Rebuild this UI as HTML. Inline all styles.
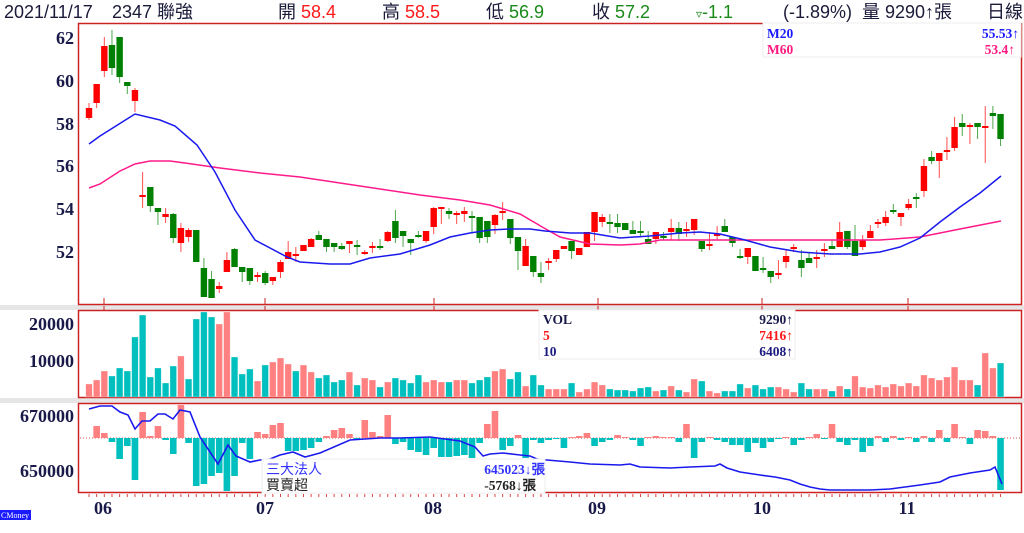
<!DOCTYPE html>
<html><head><meta charset="utf-8">
<style>
html,body{margin:0;padding:0;background:#fff;width:1024px;height:533px;overflow:hidden}
svg{position:absolute;left:0;top:0}
.hd{font-family:"Liberation Sans","Noto Sans CJK TC",sans-serif;font-size:18px;fill:#1a1a3a}
.ax{font-family:"Liberation Serif",serif;font-weight:bold;font-size:18px;fill:#1a1a4a}
.lg{font-family:"Liberation Serif",serif;font-weight:bold;font-size:13.5px}
.cj{font-family:"Liberation Sans","Noto Sans CJK TC",sans-serif;font-size:14px}
</style></head><body>
<svg id="s" width="1024" height="533" xmlns="http://www.w3.org/2000/svg">
<rect x="0" y="305" width="1024" height="5" fill="#e6e6e6"/>
<rect x="0" y="398" width="1024" height="5" fill="#e6e6e6"/>
<g id="g"></g>
<text class="hd" x="4" y="18">2021/11/17</text>
<text class="hd" x="112" y="18">2347 聯強</text>
<text class="hd" x="278" y="18">開 <tspan style="fill:#ff1a1a">58.4</tspan></text>
<text class="hd" x="382" y="18">高 <tspan style="fill:#ff1a1a">58.5</tspan></text>
<text class="hd" x="486" y="18">低 <tspan style="fill:#1a8a1a">56.9</tspan></text>
<text class="hd" x="592" y="18">收 <tspan style="fill:#1a8a1a">57.2</tspan></text>
<text class="hd" x="696" y="18" style="fill:#1a8a1a"><tspan font-size="12">▿</tspan>-1.1</text>
<text class="hd" x="783" y="18">(-1.89%)</text>
<text class="hd" x="862" y="18">量 9290↑張</text>
<text class="hd" x="987" y="18">日線</text>
<text class="ax" x="74" y="44" text-anchor="end">62</text>
<text class="ax" x="74" y="87" text-anchor="end">60</text>
<text class="ax" x="74" y="130" text-anchor="end">58</text>
<text class="ax" x="74" y="172" text-anchor="end">56</text>
<text class="ax" x="74" y="215" text-anchor="end">54</text>
<text class="ax" x="74" y="258" text-anchor="end">52</text>
<text class="ax" x="74" y="330" text-anchor="end">20000</text>
<text class="ax" x="74" y="367" text-anchor="end">10000</text>
<text class="ax" x="74" y="422" text-anchor="end">670000</text>
<text class="ax" x="74" y="477" text-anchor="end">650000</text>
<text class="ax" x="103" y="514" text-anchor="middle" font-size="15">06</text>
<text class="ax" x="265" y="514" text-anchor="middle" font-size="15">07</text>
<text class="ax" x="433" y="514" text-anchor="middle" font-size="15">08</text>
<text class="ax" x="597" y="514" text-anchor="middle" font-size="15">09</text>
<text class="ax" x="762" y="514" text-anchor="middle" font-size="15">10</text>
<text class="ax" x="907" y="514" text-anchor="middle" font-size="15">11</text>
<rect x="0" y="510" width="31" height="10" fill="#1a1aff"/>
<text x="1" y="518" font-family="Liberation Serif,serif" font-size="8" fill="#fff">CMoney</text>
<rect x="763" y="23" width="258" height="34" fill="#fff" stroke="#eee"/>
<text class="lg" x="767" y="38" fill="#1a1aff">M20</text>
<text class="lg" x="1019" y="38" fill="#1a1aff" text-anchor="end">55.53↑</text>
<text class="lg" x="767" y="54" fill="#ff1a80">M60</text>
<text class="lg" x="1015" y="54" fill="#ff1a80" text-anchor="end">53.4↑</text>
<rect x="539" y="310" width="256" height="49" fill="#fff" stroke="#eee"/>
<text class="lg" x="543" y="324" fill="#1a1a4a">VOL</text>
<text class="lg" x="793" y="324" fill="#1a1a4a" text-anchor="end">9290↑</text>
<text class="lg" x="543" y="340" fill="#ff1a1a">5</text>
<text class="lg" x="793" y="340" fill="#ff1a1a" text-anchor="end">7416↑</text>
<text class="lg" x="543" y="356" fill="#1a1a80">10</text>
<text class="lg" x="793" y="356" fill="#1a1a80" text-anchor="end">6408↑</text>
<rect x="262" y="459" width="283" height="34" fill="#fff" stroke="#eee"/>
<text class="cj" x="266" y="474" fill="#3333ff">三大法人</text>
<text class="cj" x="266" y="490" fill="#222">買賣超</text>
<text class="lg" x="545" y="474" fill="#3333ff" text-anchor="end" font-size="14">645023↓張</text>
<text class="lg" x="536" y="490" fill="#222" text-anchor="end" font-size="14">-5768↓張</text>
</svg>
<script>
var C=[["r",108,118,103,120],["r",84,103,84,108],["r",46,71,37,77],["g",45,68,30,75],["g",37,77,37,83],["g",82,86,82,94],["r",90,101,88,112],["r",195,197,172,208],["g",187,206,187,212],["g",208,212,208,225],["r",214,217,208,223],["g",214,238,213,243],["r",228,243,223,252],["r",230,237,228,242],["g",230,262,230,262],["g",268,297,258,297],["g",279,298,271,298],["r",286,289,282,293],["r",260,272,252,272],["g",249,267,248,267],["g",267,272,267,282],["g",268,281,268,285],["r",275,277,272,282],["g",273,283,271,285],["r",277,281,277,285],["r",262,272,260,278],["r",252,259,241,259],["r",254,256,247,262],["r",245,251,245,251],["r",239,247,238,247],["g",235,240,231,240],["g",239,247,239,252],["g",243,247,243,252],["g",246,249,243,250],["r",241,244,241,253],["g",245,247,240,255],["r",252,253,250,255],["r",246,248,242,253],["g",246,247,239,250],["r",232,241,231,242],["g",221,238,210,243],["g",231,236,231,247],["g",239,243,239,255],["g",235,236,231,238],["r",231,241,231,243],["r",208,227,207,234],["r",207,209,207,224],["g",211,214,208,219],["r",213,215,211,224],["r",211,214,207,222],["g",216,218,211,233],["g",217,238,217,243],["g",221,237,221,243],["r",215,225,214,234],["r",211,213,202,220],["g",219,238,219,244],["g",237,251,237,270],["r",246,266,239,266],["g",256,272,256,277],["g",273,277,262,283],["r",261,263,258,270],["r",250,259,250,262],["r",246,249,246,249],["g",241,251,241,259],["r",248,255,248,255],["r",232,247,232,247],["r",212,232,212,241],["r",217,222,214,227],["g",222,224,214,233],["g",223,227,214,233],["g",223,230,223,230],["g",230,234,221,234],["g",231,232,221,237],["g",239,244,231,244],["r",232,239,232,244],["g",236,238,232,240],["r",228,232,219,240],["g",228,234,222,241],["r",229,231,222,237],["r",219,230,219,235],["g",241,249,241,252],["r",244,246,232,250],["r",234,236,226,240],["g",226,232,219,232],["g",237,243,237,247],["g",256,258,249,259],["r",248,257,248,264],["g",256,271,256,271],["g",268,270,257,273],["g",271,277,271,283],["r",273,275,260,279],["r",256,262,250,268],["r",247,249,244,252],["g",260,268,250,277],["g",258,263,252,263],["r",257,259,250,268],["r",249,251,243,257],["g",246,249,240,249],["r",232,247,222,247],["g",231,247,231,249],["g",241,256,225,256],["r",240,247,235,250],["r",231,238,225,238],["r",222,224,219,228],["r",217,223,211,226],["g",210,212,204,214],["r",213,217,213,226],["r",204,208,199,210],["g",197,199,193,208],["r",166,191,159,197],["g",157,161,151,164],["r",153,161,153,178],["r",150,152,137,160],["r",127,148,117,151],["g",123,127,114,136],["r",125,127,123,144],["g",123,127,123,139],["r",126,128,106,163],["g",113,116,106,129],["g",114,139,114,146]];
var V=[384,380,371,376,368,371,337,315,377,368,383,366,356,379,319,312,317,324,312,357,374,369,381,365,362,358,364,371,
365,372,378,375,382,380,372,385,378,380,387,382,378,380,383,375,382,380,382,
382,380,380,383,380,377,371,369,379,372,386,375,385,389,389,389,383,392,389,382,385,389,390,390,391,388,387,391,390,386,390,392,379,381,391,393,391,391,384,388,385,389,387,387,389,392,383,389,389,389,391,386,389,
376,387,388,385,387,384,386,383,386,375,378,380,377,367,380,380,385,353,368,363];
var VC="rrrtttttttttrttttrrtttrtrrrt";
var I=[0,426,433,442,459,446,480,412,436,426,440,454,405,443,486,484,476,473,491,476,443,459,432,434,425,423,451,451,
450,448,442,436,430,428,434,440,420,432,436,415,444,442,450,452,455,448,
457,457,456,455,458,443,424,411,450,446,435,458,440,443,440,439,448,437,436,433,446,442,440,435,437,440,446,437,436,437,437,442,424,458,442,437,440,442,445,445,452,443,448,442,439,437,445,440,437,434,439,424,442,
445,440,452,446,436,442,436,440,437,442,436,442,430,442,424,437,444,430,431,436,490];
var M20=[[89,144],[100,136],[135,114],[160,120],[175,126],[197,145],[215,172],[235,210],[255,240],[287,257],[300,262],[330,264],[350,264],[370,258],[400,254],[430,245],[450,237],[470,233],[490,230],[510,229],[530,229],[545,231],[570,233],[590,233],[620,238],[650,236],[680,233],[700,232],[720,234],[745,240],[770,247],[800,252],[830,254],[860,254],[880,252],[900,247],[920,238],[940,222],[960,207],[980,193],[1001,176]];
var M60=[[89,188],[100,184],[120,171],[135,164],[150,161],[170,161],[185,163],[220,168],[260,173],[300,177],[340,183],[380,189],[420,195],[460,200],[490,205],[520,214],[544,228],[560,237],[590,244],[620,245],[640,244],[660,240],[700,240],[740,240],[800,240],[840,240],[880,240],[920,237],[960,229],[1001,221]];
var L=[[89,409],[100,406],[112,406],[120,412],[128,415],[135,429],[142,421],[150,421],[158,414],[165,414],[173,419],[180,410],[190,412],[200,437],[218,464],[228,445],[236,456],[250,462],[260,460],[270,459],[280,455],[293,452],[305,457],[320,453],[350,440],[380,438],[400,438],[430,437],[460,441],[475,447],[483,456],[490,454],[503,453],[520,455],[530,456],[537,459],[547,460],[570,462],[590,464],[620,465],[630,464],[640,467],[670,468],[690,467],[715,466],[720,464],[727,468],[740,472],[760,475],[775,477],[790,480],[800,484],[810,487],[820,489],[830,490],[870,490],[890,489],[905,487],[920,485],[940,482],[950,477],[970,473],[990,470],[995,467],[1002,484]];
var h='';
function X(i){return 89+i*7.66;}
function pts(a){return a.map(function(p){return p[0]+','+p[1]}).join(' ');}
h+='<rect x="78.5" y="23.5" width="943" height="281" fill="none" stroke="#cc2222" stroke-width="1.5"/>';
h+='<rect x="78.5" y="310.5" width="943" height="87" fill="none" stroke="#cc2222" stroke-width="1.5"/>';
h+='<rect x="78.5" y="403.5" width="943" height="89" fill="none" stroke="#cc2222" stroke-width="1.5"/>';
[104,265,434,598,762,908].forEach(function(x){h+='<line x1="'+x+'" y1="298" x2="'+x+'" y2="304" stroke="#cc2222"/>';h+='<line x1="'+x+'" y1="306" x2="'+x+'" y2="310" stroke="#cc2222"/>';});
for(var i=0;i<120;i++){h+='<line x1="'+X(i)+'" y1="494" x2="'+X(i)+'" y2="497" stroke="#dd4444"/>';}
h+='<line x1="80" y1="438" x2="1020" y2="438" stroke="#e05050" stroke-dasharray="1,2"/>';
for(var i=0;i<120;i++){
 var x=X(i)-3.3, c;
 if(i<28)c=VC[i]=='r'?'#ff8080':'#00bfbf'; else if(i>=100)c=(i==116||i==119)?'#00bfbf':'#ff8080'; else c=C[i][0]=='r'?'#ff8080':'#00bfbf';
 h+='<rect x="'+x+'" y="'+V[i]+'" width="6.6" height="'+(397-V[i])+'" fill="'+c+'" stroke="#fff" stroke-opacity=".5" stroke-width=".6"/>';
 var v=I[i]; if(v){ if(v<438)h+='<rect x="'+x+'" y="'+v+'" width="6.6" height="'+(438-v)+'" fill="#ff8080"/>'; else h+='<rect x="'+x+'" y="438" width="6.6" height="'+(v-438)+'" fill="#00bfbf"/>';}
}
h+='<polyline points="'+pts(L)+'" fill="none" stroke="#1a1aee" stroke-width="1.6"/>';
for(var i=0;i<120;i++){var d=C[i],col=d[0]=='r'?'#ff0000':'#008000',x=X(i);
 h+='<line x1="'+x+'" y1="'+d[3]+'" x2="'+x+'" y2="'+d[4]+'" stroke="'+col+'" stroke-opacity=".7"/>';
 var t=d[1],b=Math.max(d[2],d[1]+2);
 h+='<rect x="'+(x-3.2)+'" y="'+t+'" width="6.4" height="'+(b-t)+'" fill="'+col+'"/>';}
h+='<polyline points="'+pts(M60)+'" fill="none" stroke="#ff1a8c" stroke-width="1.5"/>';
h+='<polyline points="'+pts(M20)+'" fill="none" stroke="#1a1aee" stroke-width="1.5"/>';
document.getElementById('g').innerHTML=h;
</script>
</body></html>
